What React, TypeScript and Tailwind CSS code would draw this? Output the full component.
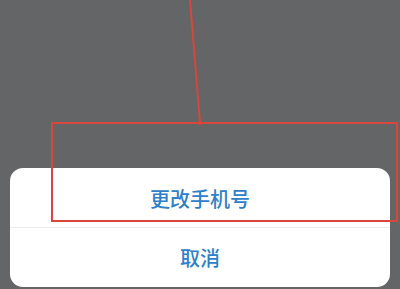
export default function App() {
  return (
    <div className="relative h-[289px] w-[400px] overflow-hidden bg-[#646567] font-['Noto_Sans_CJK_SC',sans-serif]">
      {/* Action sheet */}
      <div className="flex h-full flex-col justify-end pb-[2px] pl-[10px] pr-[10px]">
        <div className="overflow-hidden rounded-[13px] bg-white">
          <button className="flex h-[59px] w-full items-center justify-center pt-[2px] text-[20px] font-medium text-[#2f80c9]">
            更改手机号
          </button>
          <div className="h-px bg-[#ececec]" />
          <button className="flex h-[59px] w-full items-center justify-center pt-[1px] text-[20px] font-medium text-[#2f80c9]">
            取消
          </button>
        </div>
      </div>

      {/* Annotation */}
      <svg className="absolute left-0 top-0" width="400" height="130">
        <line x1="190" y1="0" x2="200" y2="123" stroke="#d8463c" strokeWidth="2" />
        <circle cx="200" cy="123" r="2" fill="#d8463c" />
      </svg>
      <div className="absolute left-[51px] top-[122px] h-[100px] w-[347px] border-2 border-solid border-[#d8463c]" />
    </div>
  );
}
